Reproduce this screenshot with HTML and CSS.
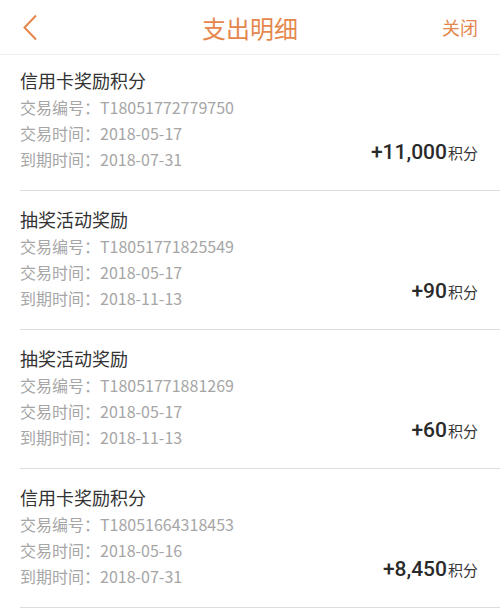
FILE: index.html
```html
<!DOCTYPE html>
<html lang="zh-CN">
<head>
  <meta charset="UTF-8">
  <meta name="viewport" content="width=device-width, initial-scale=1.0">
  <title>支出明细</title>
  <link rel="stylesheet" href="styles.css">
</head>
<body>
  <header class="navbar">
    <span class="back">
      <svg width="16" height="27" viewBox="0 0 16 27"><path d="M14 1.5 L2.5 13.5 L14 25.5" fill="none" stroke="#e5874d" stroke-width="2"/></svg>
    </span>
    <h1>支出明细</h1>
    <span class="close">关闭</span>
  </header>

  <ul class="list">
    <li class="item">
      <div class="info">
        <div class="name">信用卡奖励积分</div>
        <div class="row">交易编号：T18051772779750</div>
        <div class="row">交易时间：2018-05-17</div>
        <div class="row">到期时间：2018-07-31</div>
      </div>
      <div class="amount">+11,000<span class="unit">积分</span></div>
    </li>
    <li class="item">
      <div class="info">
        <div class="name">抽奖活动奖励</div>
        <div class="row">交易编号：T18051771825549</div>
        <div class="row">交易时间：2018-05-17</div>
        <div class="row">到期时间：2018-11-13</div>
      </div>
      <div class="amount">+90<span class="unit">积分</span></div>
    </li>
    <li class="item">
      <div class="info">
        <div class="name">抽奖活动奖励</div>
        <div class="row">交易编号：T18051771881269</div>
        <div class="row">交易时间：2018-05-17</div>
        <div class="row">到期时间：2018-11-13</div>
      </div>
      <div class="amount">+60<span class="unit">积分</span></div>
    </li>
    <li class="item">
      <div class="info">
        <div class="name">信用卡奖励积分</div>
        <div class="row">交易编号：T18051664318453</div>
        <div class="row">交易时间：2018-05-16</div>
        <div class="row">到期时间：2018-07-31</div>
      </div>
      <div class="amount">+8,450<span class="unit">积分</span></div>
    </li>
  </ul>
</body>
</html>
```

FILE: styles.css
```css
body {
  margin: 0;
  background: #fff;
  font-family: "Noto Sans CJK SC", "Noto Sans", sans-serif;
  color: #333;
}
.navbar {
  height: 54px;
  display: flex;
  align-items: center;
  justify-content: space-between;
  padding: 0 22px 0 22px;
  border-bottom: 1px solid #eee;
  position: relative;
}
.navbar h1 {
  position: absolute;
  left: 0;
  right: 0;
  margin: 0;
  text-align: center;
  font-size: 24px;
  font-weight: 400;
  color: #e5874d;
  pointer-events: none;
}
.back {
  display: flex;
  margin-top: 1px;
}
.close {
  font-size: 18px;
  color: #e5874d;
}
.list {
  list-style: none;
  margin: 0;
  padding: 0;
}
.item {
  display: flex;
  justify-content: space-between;
  margin-left: 20px;
  padding: 14px 22px 18px 0;
  border-bottom: 1px solid #ddd;
}
.item:first-child {
  padding-top: 11px;
}
.name {
  font-size: 18px;
  line-height: 28px;
  color: #333;
}
.row {
  font-size: 16px;
  line-height: 26px;
  color: #a6a6a6;
}
.amount {
  align-self: flex-end;
  margin-bottom: 7px;
  line-height: 24px;
  font-family: Roboto, "Liberation Sans", sans-serif;
  font-size: 21px;
  font-weight: 500;
  color: #2a2a2a;
}
.unit {
  font-family: "Noto Sans CJK SC", sans-serif;
  font-size: 15px;
  font-weight: 400;
  color: #333;
  margin-left: 1px;
}
```
